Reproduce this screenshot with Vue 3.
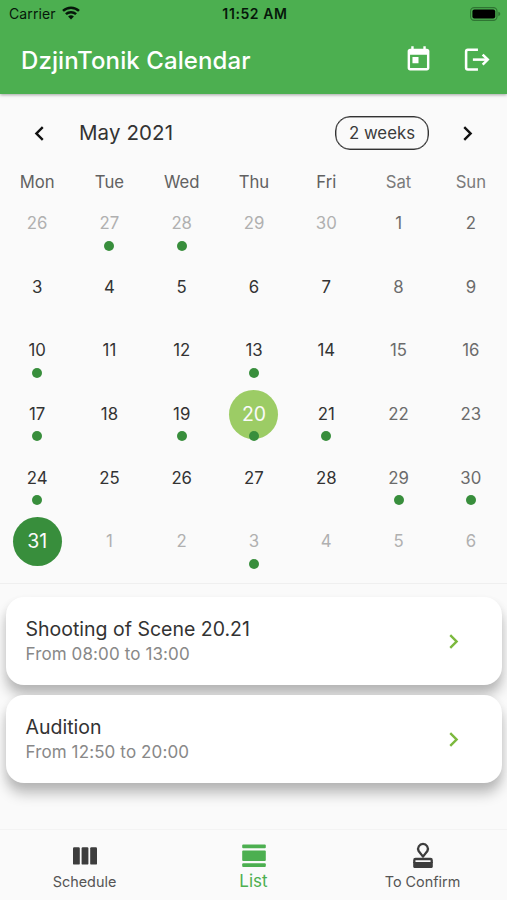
<script setup>
const weekdays = ['Mon', 'Tue', 'Wed', 'Thu', 'Fri', 'Sat', 'Sun']
const marked = [1, 2, 14, 17, 21, 23, 24, 25, 28, 33, 34, 38]

// The grid starts on April 26 and runs for six weeks.
const days = Array.from({ length: 42 }, (_, i) => {
  const n = i - 4
  const outside = n < 1 || n > 31
  return {
    id: i,
    label: n < 1 ? n + 30 : n > 31 ? n - 31 : n,
    dot: marked.includes(i),
    classes: {
      outside,
      weekend: !outside && i % 7 > 4,
      today: n === 20,
      selected: n === 31,
    },
  }
})

const events = [
  { title: 'Shooting of Scene 20.21', time: 'From 08:00 to 13:00', kind: 'shoot' },
  { title: 'Audition', time: 'From 12:50 to 20:00', kind: 'audition' },
]
</script>

<template>
  <div class="screen">
    <header class="top">
      <div class="status">
        <div class="carrier">
          <span class="carrier-name">Carrier</span>
          <svg class="wifi" viewBox="0 0 18 14" fill="none" stroke="#06170a" stroke-width="2.5">
            <path d="M1 4.9A11.6 11.6 0 0 1 17 4.9" />
            <path d="M3.9 8.200A7.4 7.4 0 0 1 14.1 8.200" />
            <path d="M9 13.6 6.1 10.6A4.2 4.2 0 0 1 11.9 10.6Z" fill="#06170a" stroke="none" />
          </svg>
        </div>
        <span class="clock">11:52 AM</span>
        <svg class="battery" viewBox="0 0 31 14">
          <rect x="0.6" y="0.6" width="26.4" height="12.8" rx="3.6" fill="none" stroke="#2f7533" stroke-width="1.1" />
          <rect x="2.4" y="2.4" width="22.8" height="9.2" rx="2" fill="#000" />
          <path d="M28.3 4.8Q30.3 5.4 30.3 7T28.3 9.2Z" fill="#2f7533" />
        </svg>
      </div>
      <div class="appbar">
        <h1>DzjinTonik Calendar</h1>
        <div class="actions">
          <svg viewBox="0 0 24 24" fill="#fff">
            <path d="M19 3h-1V1h-2v2H8V1H6v2H5c-1.11 0-1.99.9-1.99 2L3 19c0 1.1.89 2 2 2h14c1.1 0 2-.9 2-2V5c0-1.1-.9-2-2-2zm0 16H5V8h14v11zM7 10h5v5H7z" />
          </svg>
          <svg viewBox="0 0 24 24" fill="none" stroke="#fff" stroke-width="2.1">
            <path d="M13.200 4H4.800Q3.400 4 3.400 5.400V18.800Q3.400 20.200 4.800 20.200H13.200" />
            <path d="M9 12.100H21.500" />
            <path d="M17.100 7.900 21.300 12.100 17.100 16.300" />
          </svg>
        </div>
      </div>
    </header>

    <section class="calendar">
      <div class="month">
        <svg class="arrow" viewBox="0 0 24 24"><path d="M15.41 7.41 14 6l-6 6 6 6 1.41-1.41L10.83 12z" /></svg>
        <h2>May 2021</h2>
        <button class="format">2 weeks</button>
        <svg class="arrow" viewBox="0 0 24 24"><path d="M10 6 8.590 7.410 13.170 12l-4.580 4.590L10 18l6-6z" /></svg>
      </div>
      <div class="weekdays">
        <span v-for="(w, i) in weekdays" :key="w" :class="{ weekend: i > 4 }">{{ w }}</span>
      </div>
      <div class="days">
        <div v-for="d in days" :key="d.id" class="cell">
          <span class="day" :class="d.classes">{{ d.label }}</span>
          <i v-if="d.dot" class="dot"></i>
        </div>
      </div>
    </section>

    <main class="events">
      <article v-for="e in events" :key="e.kind" class="card" :class="e.kind">
        <div>
          <h3>{{ e.title }}</h3>
          <p>{{ e.time }}</p>
        </div>
        <svg class="go" viewBox="0 0 24 24"><path d="M10 6 8.590 7.410 13.170 12l-4.580 4.590L10 18l6-6z" /></svg>
      </article>
    </main>

    <nav class="tabs">
      <a class="tab">
        <svg viewBox="0 0 28 28" fill="#3d3d3d">
          <rect x="2" y="5.200" width="6.800" height="17.400" rx="1.200" />
          <rect x="10.600" y="5.200" width="6.800" height="17.400" rx="1.200" />
          <rect x="19.200" y="5.200" width="6.800" height="17.400" rx="1.200" />
        </svg>
        <span class="schedule">Schedule</span>
      </a>
      <a class="tab active">
        <svg viewBox="0 0 28 28" fill="#4caf50">
          <rect x="2.200" y="2.600" width="23.600" height="3.700" rx="1" />
          <rect x="2.200" y="8.500" width="23.600" height="10.600" rx="1" />
          <rect x="2.200" y="21.200" width="23.600" height="3.900" rx="1" />
        </svg>
        <span class="list">List</span>
      </a>
      <a class="tab">
        <svg viewBox="0 0 28 28" fill="none" stroke="#3d3d3d" stroke-width="2.300">
          <path d="M14 14.600 9.600 9A4.900 4.900 0 1 1 18.400 9Z" stroke-linejoin="round" />
          <path d="M5.300 21V18.200Q5.300 17 6.500 17H21.500Q22.700 17 22.700 18.200V21" />
          <path d="M4.200 20H23.800V24.800Q23.800 25.900 22.700 25.900H5.300Q4.200 25.900 4.200 24.800Z" fill="#3d3d3d" stroke="none" />
        </svg>
        <span class="confirm">To Confirm</span>
      </a>
    </nav>
  </div>
</template>

<style>
body {
  margin: 0;
  background: #fafafa;
}
</style>

<style scoped>
* {
  box-sizing: border-box;
}
.screen {
  width: 507px;
  height: 900px;
  display: flex;
  flex-direction: column;
  overflow: hidden;
  background: #fafafa;
  font-family: Inter, "Liberation Sans", sans-serif;
  color: #333;
}
h1, h2, h3, p {
  margin: 0;
  font-weight: 400;
  white-space: nowrap;
}
svg {
  display: block;
  flex: none;
}
.top {
  flex: none;
  height: 94px;
  background: #4caf50;
  box-shadow: 0 1px 3px rgba(0, 0, 0, 0.35);
}
.status {
  height: 25px;
  padding: 3px 6px 0 9px;
  display: grid;
  grid-template-columns: 1fr auto 1fr;
  align-items: center;
  color: #06170a;
  font-size: 14px;
  line-height: 20px;
}
.carrier {
  display: flex;
  align-items: center;
  gap: 6px;
}
.carrier-name {
  letter-spacing: 0.100px;
}
.wifi {
  width: 18px;
  height: 14px;
  margin-top: -2px;
}
.clock {
  font-weight: 600;
  letter-spacing: 0.600px;
}
.battery {
  width: 31px;
  height: 14px;
  justify-self: end;
}
.appbar {
  height: 69px;
  padding: 0 16px 0 21px;
  display: flex;
  align-items: center;
  justify-content: space-between;
  color: #fff;
}
h1 {
  padding-top: 1px;
  font-size: 24px;
  font-weight: 500;
  letter-spacing: 0.100px;
}
.actions {
  display: flex;
  gap: 29px;
}
.actions svg {
  width: 29px;
  height: 29px;
}
.calendar {
  flex: none;
  height: 490px;
  border-bottom: 1px solid #efefef;
}
.month {
  height: 78px;
  padding: 0 25px;
  display: flex;
  align-items: center;
}
.arrow {
  width: 29px;
  height: 29px;
  fill: #111;
}
h2 {
  flex: 1;
  padding: 0 0 1px 25px;
  font-size: 20.500px;
  letter-spacing: 0.100px;
}
.format {
  width: 94px;
  height: 34px;
  margin-right: 24px;
  padding: 0;
  border: 1px solid #333;
  box-shadow: inset 0 0 0 0.500px #555;
  border-radius: 15px;
  background: transparent;
  color: #3b3b3b;
  font: 400 16.800px Inter, "Liberation Sans", sans-serif;
}
.weekdays {
  height: 20px;
  display: grid;
  grid-template-columns: repeat(7, 1fr);
  text-align: center;
  font-size: 16.700px;
  line-height: 20px;
  color: #616161;
}
.weekdays .weekend {
  color: #7a7a7a;
}
.days {
  display: grid;
  grid-template-columns: repeat(7, 1fr);
  grid-auto-rows: 63.600px;
}
.weekdays, .days {
  padding: 0 0 0 1px;
}
.cell {
  position: relative;
  display: grid;
  place-items: center;
}
.day {
  width: 49px;
  height: 49px;
  border-radius: 50%;
  text-align: center;
  font-size: 16.800px;
  line-height: 49px;
  color: #333;
}
.day.weekend {
  color: #6b6b6b;
}
.day.outside {
  color: #b0b0b0;
}
.day.today {
  background: #9ccc65;
  color: #fafafa;
  font-size: 19.500px;
}
.day.selected {
  background: #388e3c;
  color: #fafafa;
  font-size: 19.500px;
}
.dot {
  position: absolute;
  left: calc(50% - 5px);
  bottom: 5px;
  width: 10px;
  height: 10px;
  border-radius: 50%;
  background: #388e3c;
}
.events {
  flex: 1;
  padding: 13px 5px 0 6px;
  display: flex;
  flex-direction: column;
  gap: 10px;
}
.card {
  height: 88px;
  padding: 0 34px 0 19.500px;
  display: flex;
  align-items: center;
  justify-content: space-between;
  background: #fff;
  border-radius: 18px;
  box-shadow: 0 11px 13px rgba(0, 0, 0, 0.23), 0 4px 9px rgba(0, 0, 0, 0.07);
}
h3 {
  font-size: 19.500px;
  line-height: 26px;
}
.card p {
  font-size: 17px;
  line-height: 24px;
  letter-spacing: 0.120px;
  color: #888;
}
.go {
  width: 29px;
  height: 29px;
  fill: #7cb93e;
}
.tabs {
  flex: none;
  height: 71px;
  padding-top: 12px;
  display: grid;
  grid-template-columns: repeat(3, 1fr);
  border-top: 1px solid #f3f3f3;
  background: #fafafa;
  z-index: 1;
}
.tab {
  display: flex;
  flex-direction: column;
  align-items: center;
  color: #555;
  font-size: 14.400px;
  line-height: 20px;
}
.tab svg {
  width: 28px;
  height: 28px;
}
.tab span {
  margin-top: 2px;
}
.tab.active {
  color: #4caf50;
  font-size: 17px;
}
.tab.active span {
  margin-top: 1px;
}
</style>
